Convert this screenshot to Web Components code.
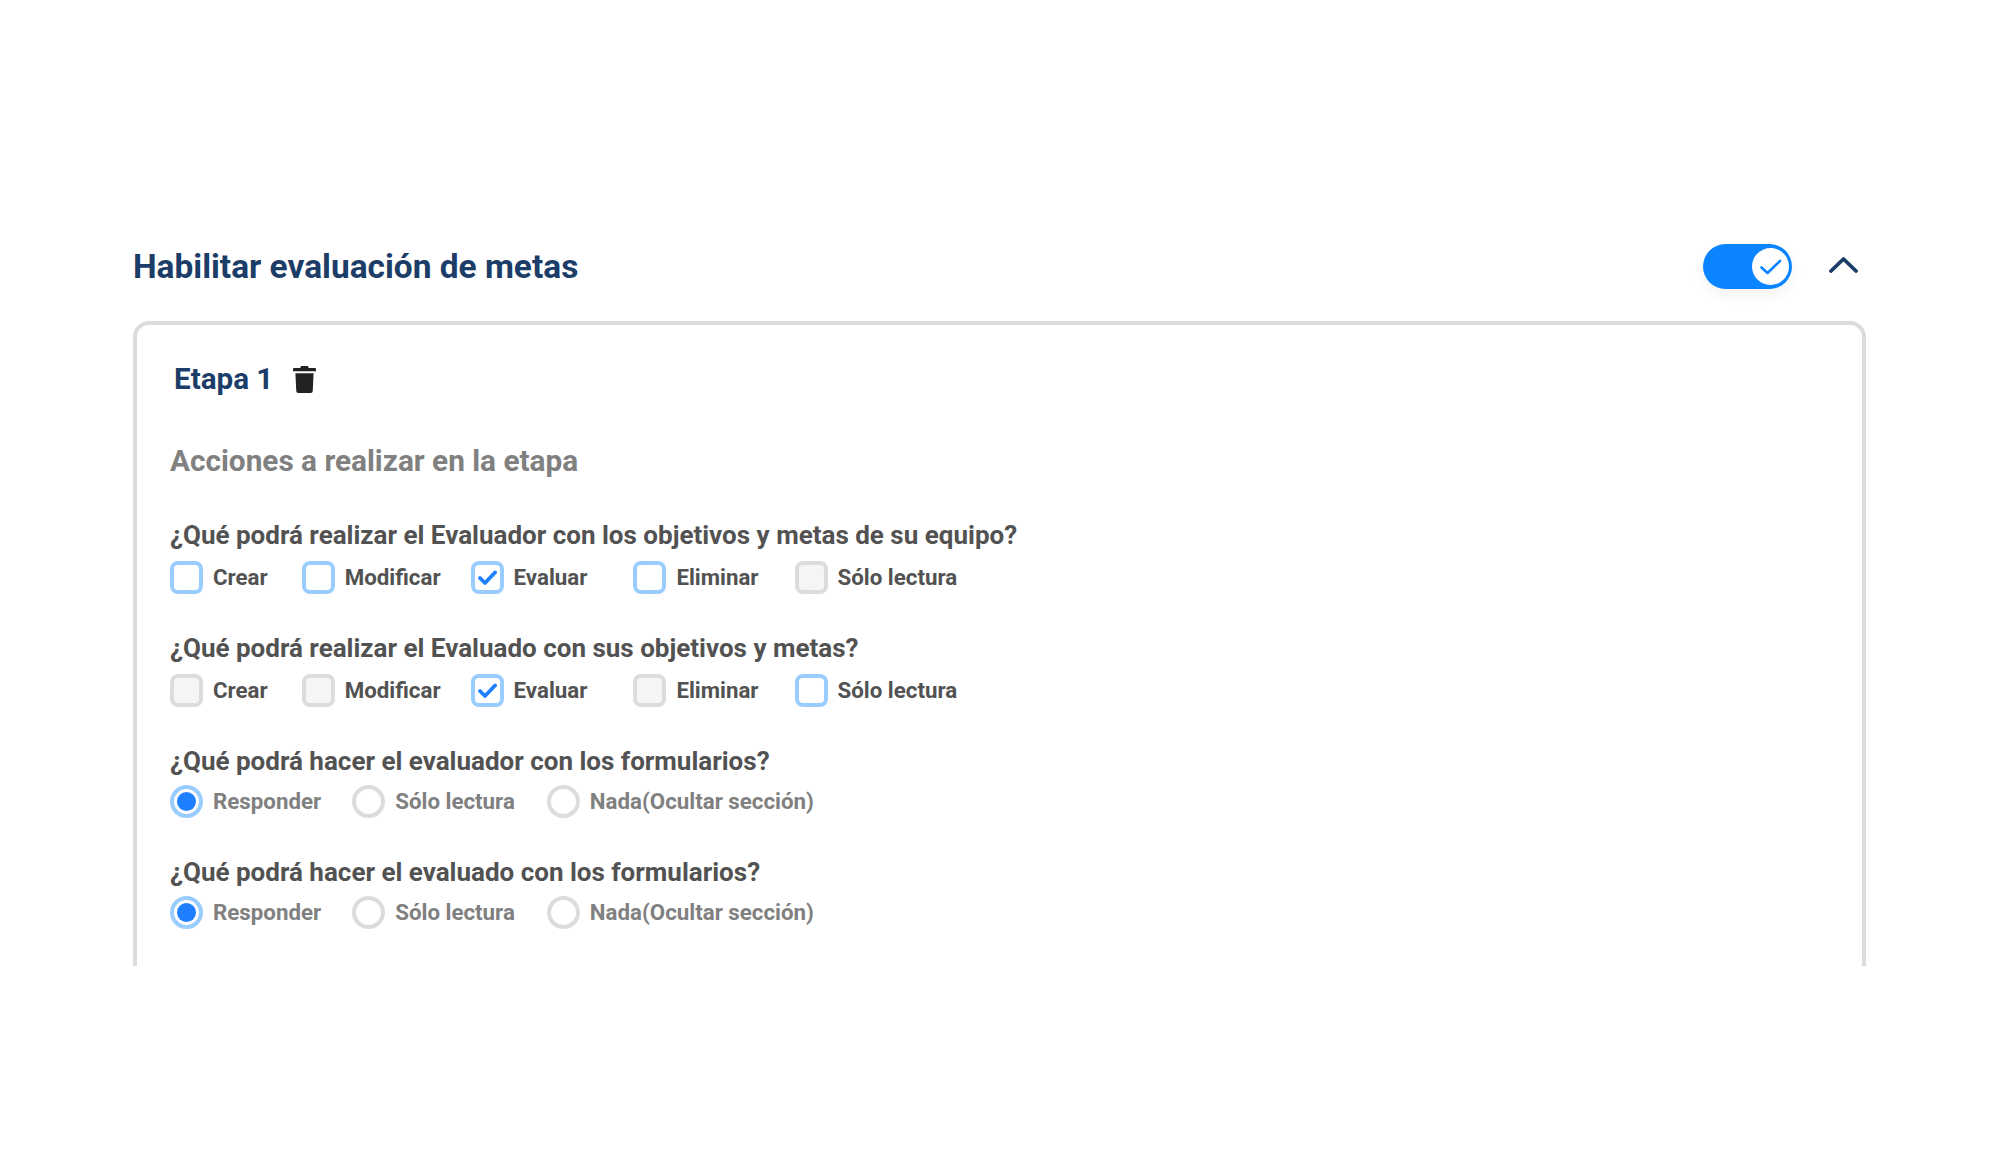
<!DOCTYPE html>
<html lang="es">
<head>
<meta charset="utf-8">
<title>Habilitar evaluación de metas</title>
<style>
  html, body { margin: 0; background: #fff; }
  body { font-family: Roboto, "Liberation Sans", sans-serif; }
</style>
</head>
<body>

<metas-page>
  <metas-header>Habilitar evaluación de metas</metas-header>
  <etapa-card nombre="Etapa 1">
    <span slot="subtitulo">Acciones a realizar en la etapa</span>

    <accion-grupo pregunta="¿Qué podrá realizar el Evaluador con los objetivos y metas de su equipo?">
      <opcion-check activo style="margin-right:34px">Crear</opcion-check>
      <opcion-check activo style="margin-right:30px">Modificar</opcion-check>
      <opcion-check activo marcado style="margin-right:46px">Evaluar</opcion-check>
      <opcion-check activo style="margin-right:36px">Eliminar</opcion-check>
      <opcion-check>Sólo lectura</opcion-check>
    </accion-grupo>

    <accion-grupo pregunta="¿Qué podrá realizar el Evaluado con sus objetivos y metas?">
      <opcion-check style="margin-right:34px">Crear</opcion-check>
      <opcion-check style="margin-right:30px">Modificar</opcion-check>
      <opcion-check activo marcado style="margin-right:46px">Evaluar</opcion-check>
      <opcion-check style="margin-right:36px">Eliminar</opcion-check>
      <opcion-check activo>Sólo lectura</opcion-check>
    </accion-grupo>

    <accion-grupo radios pregunta="¿Qué podrá hacer el evaluador con los formularios?">
      <opcion-radio marcado style="margin-right:31px">Responder</opcion-radio>
      <opcion-radio style="margin-right:32px">Sólo lectura</opcion-radio>
      <opcion-radio>Nada(Ocultar sección)</opcion-radio>
    </accion-grupo>

    <accion-grupo radios pregunta="¿Qué podrá hacer el evaluado con los formularios?">
      <opcion-radio marcado style="margin-right:31px">Responder</opcion-radio>
      <opcion-radio style="margin-right:32px">Sólo lectura</opcion-radio>
      <opcion-radio>Nada(Ocultar sección)</opcion-radio>
    </accion-grupo>
  </etapa-card>
</metas-page>

<script>
  class MetasPage extends HTMLElement {
    constructor () {
      super();
      this.attachShadow({mode: 'open'});
      this.shadowRoot.innerHTML = `
        <style>
          :host { display: block; box-sizing: border-box; height: 1166px; padding: 244px 134px 0 133px; overflow: hidden; background: #fff; }
        </style>
        <slot></slot>`;
    }
  }
  customElements.define('metas-page', MetasPage);

  class MetasHeader extends HTMLElement {
    constructor () {
      super();
      this.attachShadow({mode: 'open'});
      this.shadowRoot.innerHTML = `
        <style>
          :host { display: flex; align-items: center; height: 45px; margin-bottom: 32px; }
          h1 { flex: 1; margin: 0; font: 700 33.45px/45px Roboto, sans-serif; color: #1b3d68; }
          svg { display: block; }
          .switch { position: relative; width: 89px; height: 45px; border-radius: 23px; background: #0a84ff; box-shadow: 0 6px 14px rgba(0,0,0,.05); }
          .knob { position: absolute; top: 4px; right: 3px; width: 37px; height: 37px; border-radius: 50%; background: #fff; display: flex; align-items: center; justify-content: center; }
          .chevron { margin: 0 8px 5px 37px; }
        </style>
        <h1><slot></slot></h1>
        <div class="switch">
          <div class="knob">
            <svg width="22" height="18" viewBox="0 0 22 18"><path d="M1.5 9.5 L7.5 15 L20 3" fill="none" stroke="#0a84ff" stroke-width="2.6" stroke-linecap="round" stroke-linejoin="round"/></svg>
          </div>
        </div>
        <svg class="chevron" width="29" height="17" viewBox="0 0 29 17"><path d="M2 15 L14.5 3 L27 15" fill="none" stroke="#1b3d68" stroke-width="3.8" stroke-linecap="round" stroke-linejoin="round"/></svg>`;
    }
  }
  customElements.define('metas-header', MetasHeader);

  class EtapaCard extends HTMLElement {
    constructor () {
      super();
      this.attachShadow({mode: 'open'});
      this.shadowRoot.innerHTML = `
        <style>
          :host { display: block; box-sizing: border-box; height: 645px; overflow: hidden; padding: 32px 33px 0; border: 4px solid #dcdcdc; border-bottom: 0; border-radius: 16px 16px 0 0; }
          .cabecera { display: flex; align-items: center; gap: 20px; height: 44px; padding-left: 4px; }
          h2 { margin: 0; font: 700 29.6px/44px Roboto, sans-serif; color: #1b3d68; }
          .sub { font: 700 29.75px/40px Roboto, sans-serif; color: #808080; margin: 40px 0 35px; }
          svg { display: block; }
        </style>
        <div class="cabecera">
          <h2></h2>
          <svg width="23" height="27" viewBox="0 0 24 28"><path fill="#222" d="M8.5 0 H15.5 L16.5 2 H23 Q24 2 24 3 V5.5 H0 V3 Q0 2 1 2 H7.5 Z M2.5 7.5 H21.5 L20.6 26 Q20.5 28 18.5 28 H5.5 Q3.5 28 3.4 26 Z"/></svg>
        </div>
        <div class="sub"><slot name="subtitulo"></slot></div>
        <slot></slot>`;
      this.shadowRoot.querySelector('h2').textContent = this.getAttribute('nombre');
    }
  }
  customElements.define('etapa-card', EtapaCard);

  class AccionGrupo extends HTMLElement {
    constructor () {
      super();
      this.attachShadow({mode: 'open'});
      this.shadowRoot.innerHTML = `
        <style>
          :host { display: block; margin-bottom: 35.5px; }
          p { margin: 0 0 6.5px; font: 700 26px/38px Roboto, sans-serif; color: #525252; }
          :host([radios]) p { margin-bottom: 4.5px; }
          .opciones { display: flex; align-items: center; }
        </style>
        <p></p>
        <div class="opciones"><slot></slot></div>`;
      this.shadowRoot.querySelector('p').textContent = this.getAttribute('pregunta');
    }
  }
  customElements.define('accion-grupo', AccionGrupo);

  class OpcionCheck extends HTMLElement {
    constructor () {
      super();
      this.attachShadow({mode: 'open'});
      this.shadowRoot.innerHTML = `
        <style>
          :host { display: inline-flex; align-items: center; gap: 10px; height: 33px; font: 700 22.3px/33px Roboto, sans-serif; color: #525252; }
          .caja { box-sizing: border-box; width: 33px; height: 33px; border: 4px solid #dcdcdc; border-radius: 8px; background: #f5f5f5; display: flex; align-items: center; justify-content: center; }
          :host([activo]) .caja { border-color: #99ccff; background: #fff; }
          svg { display: none; }
          :host([marcado]) svg { display: block; }
        </style>
        <span class="caja">
          <svg width="19" height="15" viewBox="0 0 19 15"><path d="M2 8 L7 13 L17 2.5" fill="none" stroke="#1f80ff" stroke-width="3.8" stroke-linecap="round" stroke-linejoin="round"/></svg>
        </span>
        <span><slot></slot></span>`;
    }
  }
  customElements.define('opcion-check', OpcionCheck);

  class OpcionRadio extends HTMLElement {
    constructor () {
      super();
      this.attachShadow({mode: 'open'});
      this.shadowRoot.innerHTML = `
        <style>
          :host { display: inline-flex; align-items: center; gap: 10px; height: 33px; font: 700 22.3px/33px Roboto, sans-serif; color: #808080; }
          .aro { box-sizing: border-box; width: 33px; height: 33px; border: 4px solid #dcdcdc; border-radius: 50%; background: #fff; display: flex; align-items: center; justify-content: center; }
          :host([marcado]) .aro { border-color: #99ccff; }
          .punto { display: none; width: 19px; height: 19px; border-radius: 50%; background: #1f80ff; }
          :host([marcado]) .punto { display: block; }
        </style>
        <span class="aro"><span class="punto"></span></span>
        <span><slot></slot></span>`;
    }
  }
  customElements.define('opcion-radio', OpcionRadio);
</script>
</body>
</html>
